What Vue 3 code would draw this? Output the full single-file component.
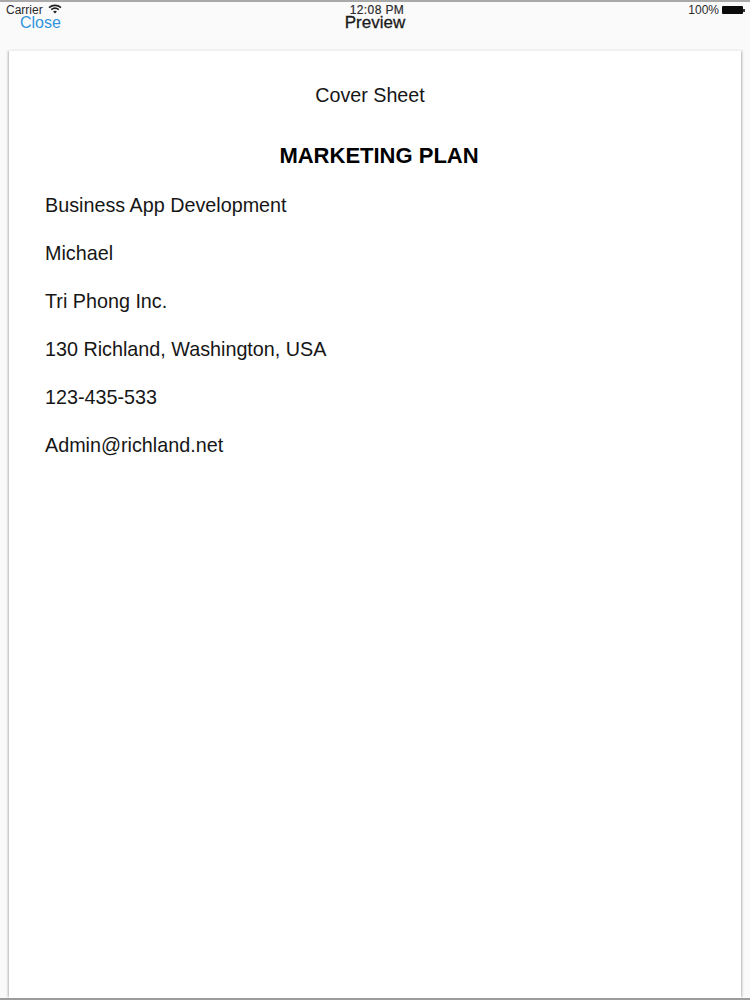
<script setup>
const lines = [
  'Business App Development',
  'Michael',
  'Tri Phong Inc.',
  '130 Richland, Washington, USA',
  '123-435-533',
  'Admin@richland.net',
]
</script>

<template>
  <div class="screen">
    <header class="top">
      <div class="status">
        <div class="status-left">
          <span>Carrier</span>
          <svg class="wifi" width="14" height="10" viewBox="0 0 14 10">
            <path d="M1 3.6C4.4.6 9.6.6 13 3.6" fill="none" stroke="#222" stroke-width="1.6" />
            <path d="M3.2 5.7c2.2-1.9 5.4-1.9 7.6 0" fill="none" stroke="#222" stroke-width="1.6" />
            <path d="M5.1 7.4c1.1-.9 2.7-.9 3.8 0L7 9.6z" fill="#222" />
          </svg>
        </div>
        <div class="status-time">12:08 PM</div>
        <div class="status-right">
          <span>100%</span>
          <span class="battery"><span class="battery-cap"></span></span>
        </div>
      </div>
      <div class="nav">
        <span class="close">Close</span>
        <span class="title">Preview</span>
      </div>
    </header>
    <main class="sheet">
      <h2 class="cover">Cover Sheet</h2>
      <h1 class="plan">MARKETING PLAN</h1>
      <p v-for="line in lines" :key="line" class="line">{{ line }}</p>
    </main>
  </div>
</template>

<style>
html, body { margin: 0; background: #fff; }
</style>

<style scoped>
.screen {
  width: 750px;
  height: 1000px;
  box-sizing: border-box;
  overflow: hidden;
  display: flex;
  flex-direction: column;
  background: #fbfafb;
  border-top: 2px solid #a9a9a9;
  border-bottom: 2px solid #9c9c9c;
  font-family: "Liberation Sans", Arial, sans-serif;
  color: #161616;
}
.top {
  height: 48px;
  flex: none;
  padding: 0 6px;
  box-sizing: border-box;
}
.status {
  display: grid;
  grid-template-columns: 1fr auto 1fr;
  align-items: center;
  height: 16px;
  font-size: 12px;
  color: #2a2a2a;
}
.status-left { display: flex; align-items: center; gap: 5px; }
.status-time { font-size: 12px; letter-spacing: 0.4px; padding-left: 4px; -webkit-text-stroke: 0.2px #2a2a2a; }
.status-right { display: flex; align-items: center; justify-content: flex-end; gap: 3px; }
.wifi { margin-top: -2px; }
.battery {
  position: relative;
  display: block;
  width: 21px;
  height: 8px;
  background: #0a0a0a;
  border-radius: 1px;
  margin-right: 1px;
}
.battery-cap {
  position: absolute;
  right: -2px;
  top: 2.5px;
  width: 2px;
  height: 3px;
  background: #333;
}
.nav {
  position: relative;
  margin-top: -5px;
  height: 20px;
  display: flex;
  align-items: center;
  justify-content: center;
  font-size: 16px;
}
.close {
  position: absolute;
  left: 14px;
  color: #2f95dd;
}
.title { font-size: 17px; color: #1a1a1a; -webkit-text-stroke: 0.3px #1a1a1a; }
.sheet {
  flex: 1;
  margin: 0 9px;
  padding: 0 36px;
  background: #fff;
  border-top: 1px solid #f0eff0;
  box-shadow: -2px 0 2px -1px #b4b4b4, 2px 0 2px -1px #b4b4b4;
  font-size: 20px;
  line-height: 24px;
}
.cover {
  margin: 32px 0 0;
  text-align: center;
  font-size: 19.7px;
  font-weight: 400;
  line-height: 24px;
  padding-right: 10px;
}
.plan {
  margin: 37px 0 0;
  text-align: center;
  font-size: 22px;
  line-height: 24px;
  font-weight: 700;
  color: #000;
  padding-left: 8px;
}
.line {
  margin: 25px 0 0;
  font-size: 19.75px;
  line-height: 24px;
}
.line + .line { margin-top: 24px; }
</style>
